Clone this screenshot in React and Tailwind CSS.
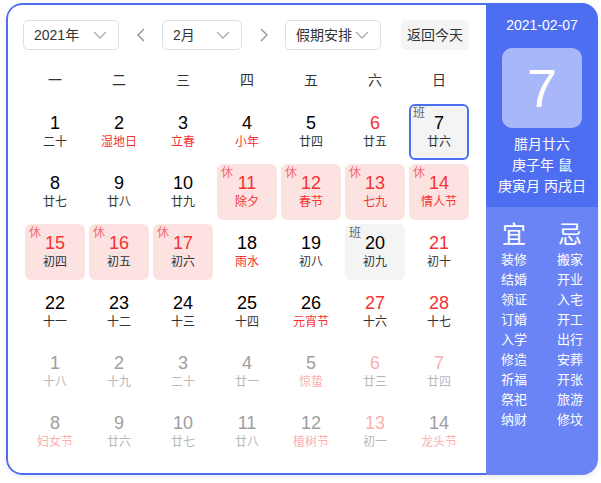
const font = { fontFamily: '"Liberation Sans", "Noto Sans CJK SC", sans-serif' };

// type: n normal, r red number, h holiday(休), w work(班), t today, o out of month
const days = [
  [1, "二十"], [2, "湿地日", "lr"], [3, "立春", "lr"], [4, "小年", "lr"], [5, "廿四"], [6, "廿五", "nr"], [7, "廿六", "today"],
  [8, "廿七"], [9, "廿八"], [10, "廿九"], [11, "除夕", "hol lr"], [12, "春节", "hol lr"], [13, "七九", "hol lr"], [14, "情人节", "hol lr"],
  [15, "初四", "hol"], [16, "初五", "hol"], [17, "初六", "hol"], [18, "雨水", "lr"], [19, "初八"], [20, "初九", "work"], [21, "初十", "nr"],
  [22, "十一"], [23, "十二"], [24, "十三"], [25, "十四"], [26, "元宵节", "lr"], [27, "十六", "nr"], [28, "十七", "nr"],
  [1, "十八", "o"], [2, "十九", "o"], [3, "二十", "o"], [4, "廿一", "o"], [5, "惊蛰", "o lp"], [6, "廿三", "o np"], [7, "廿四", "o np"],
  [8, "妇女节", "o lp"], [9, "廿六", "o"], [10, "廿七", "o"], [11, "廿八", "o"], [12, "植树节", "o lp"], [13, "初一", "o np"], [14, "龙头节", "o lp"],
];

const yi = ["装修", "结婚", "领证", "订婚", "入学", "修造", "祈福", "祭祀", "纳财"];
const ji = ["搬家", "开业", "入宅", "开工", "出行", "安葬", "开张", "旅游", "修坟"];

const Chevron = () => (
  <svg width="14" height="14" viewBox="0 0 14 14" fill="none" stroke="#a8abb2" strokeWidth="1.3">
    <polyline points="1,4 7,10 13,4" />
  </svg>
);

const Select = ({ label, width }) => (
  <div className={`${width} h-[30px] border border-[#dcdfe6] rounded-[5px] flex items-center justify-between pl-[10px] pr-[11px] text-[14px] text-[#333]`}>
    <span>{label}</span>
    <Chevron />
  </div>
);

const Arrow = ({ dir }) => (
  <div className="w-[43px] h-[30px] flex items-center justify-center">
    <svg width="10" height="16" viewBox="0 0 10 16" fill="none" stroke="#909399" strokeWidth="1.4">
      {dir === "left" ? <polyline points="8,2 2,8 8,14" /> : <polyline points="2,2 8,8 2,14" />}
    </svg>
  </div>
);

const Cell = ({ d }) => {
  const [num, lunar, flags = ""] = d;
  const f = flags.split(" ");
  const out = f.includes("o");
  const hol = f.includes("hol");
  const work = f.includes("work");
  const today = f.includes("today");

  let numColor = "text-black";
  if (hol || f.includes("nr")) numColor = "text-[#f73131]";
  if (out) numColor = f.includes("np") ? "text-[#fbb0b0]" : "text-[#9e9e9e]";

  let lunarColor = "text-[#333]";
  if (f.includes("lr")) lunarColor = "text-[#f73131]";
  if (out) lunarColor = f.includes("lp") ? "text-[#fbb0b0]" : "text-[#b8b8b8]";

  let bg = "";
  if (hol) bg = "bg-[#fde2e2]";
  if (work) bg = "bg-[#f4f4f5]";
  if (today) bg = "bg-[#f4f4f5] border-2 border-[#4e6ef2]";

  return (
    <div className={`relative h-[56px] rounded-[6px] flex flex-col items-center ${today ? "pt-[6px]" : "pt-[8px]"} ${bg}`}>
      {hol && <span className="absolute left-[4px] top-[2px] text-[12px] leading-[14px] text-[#f56c6c]">休</span>}
      {(work || today) && (
        <span className={`absolute ${today ? "left-[2px] top-0" : "left-[4px] top-[2px]"} text-[12px] leading-[14px] text-[#666]`}>班</span>
      )}
      <span className={`text-[18px] leading-[22px] ${numColor}`}>{num}</span>
      <span className={`text-[12px] leading-[16px] ${lunarColor}`}>{lunar}</span>
    </div>
  );
};

export default function App() {
  return (
    <div className="w-[601px] h-[483px] bg-white pt-[3px] pl-[6px]" style={font}>
      <div className="w-[592px] h-[472px] flex rounded-[16px] overflow-hidden shadow-[0_2px_6px_rgba(0,0,0,0.08)]">
        {/* left: calendar */}
        <div className="w-[480px] h-full border-2 border-r-0 border-[#4e6ef2] rounded-l-[16px] pl-[15px] pt-[15px]">
          <div className="flex items-center">
            <Select label="2021年" width="w-[96px]" />
            <Arrow dir="left" />
            <Select label="2月" width="w-[80px]" />
            <Arrow dir="right" />
            <Select label="假期安排" width="w-[96px]" />
            <div className="ml-[20px] w-[68px] h-[30px] rounded-[5px] bg-[#f4f4f5] flex items-center justify-center text-[14px] text-[#333]">
              返回今天
            </div>
          </div>

          <div className="ml-[2px] mt-[10px] h-[40px] grid grid-cols-[repeat(7,60px)] gap-x-[4px] items-center text-[14px] text-[#333]">
            {["一", "二", "三", "四", "五", "六", "日"].map((w) => (
              <div key={w} className="text-center">{w}</div>
            ))}
          </div>

          <div className="ml-[2px] mt-[4px] grid grid-cols-[repeat(7,60px)] gap-[4px]">
            {days.map((d, i) => (
              <Cell key={i} d={d} />
            ))}
          </div>
        </div>

        {/* right: day detail */}
        <div className="w-[112px] h-full flex flex-col text-white">
          <div className="bg-[#4e6ef2] h-[204px] flex flex-col items-center pt-[12px]">
            <div className="text-[14px] leading-[20px]">2021-02-07</div>
            <div className="mt-[13px] w-[80px] h-[80px] rounded-[10px] bg-[#a8b7f9] flex items-center justify-center text-[54px] leading-none">
              7
            </div>
            <div className="mt-[6px] text-[14px] leading-[21px] text-center">
              <div>腊月廿六</div>
              <div>庚子年 鼠</div>
              <div>庚寅月 丙戌日</div>
            </div>
          </div>
          <div className="flex-1 bg-[#6a84f5] grid grid-cols-2 content-start pt-[13px]">
            <div className="flex flex-col items-center">
              <div className="text-[24px] leading-[30px]">宜</div>
              {yi.map((t) => (
                <div key={t} className="text-[13px] leading-[20px]">{t}</div>
              ))}
            </div>
            <div className="flex flex-col items-center">
              <div className="text-[24px] leading-[30px]">忌</div>
              {ji.map((t) => (
                <div key={t} className="text-[13px] leading-[20px]">{t}</div>
              ))}
            </div>
          </div>
        </div>
      </div>
    </div>
  );
}
